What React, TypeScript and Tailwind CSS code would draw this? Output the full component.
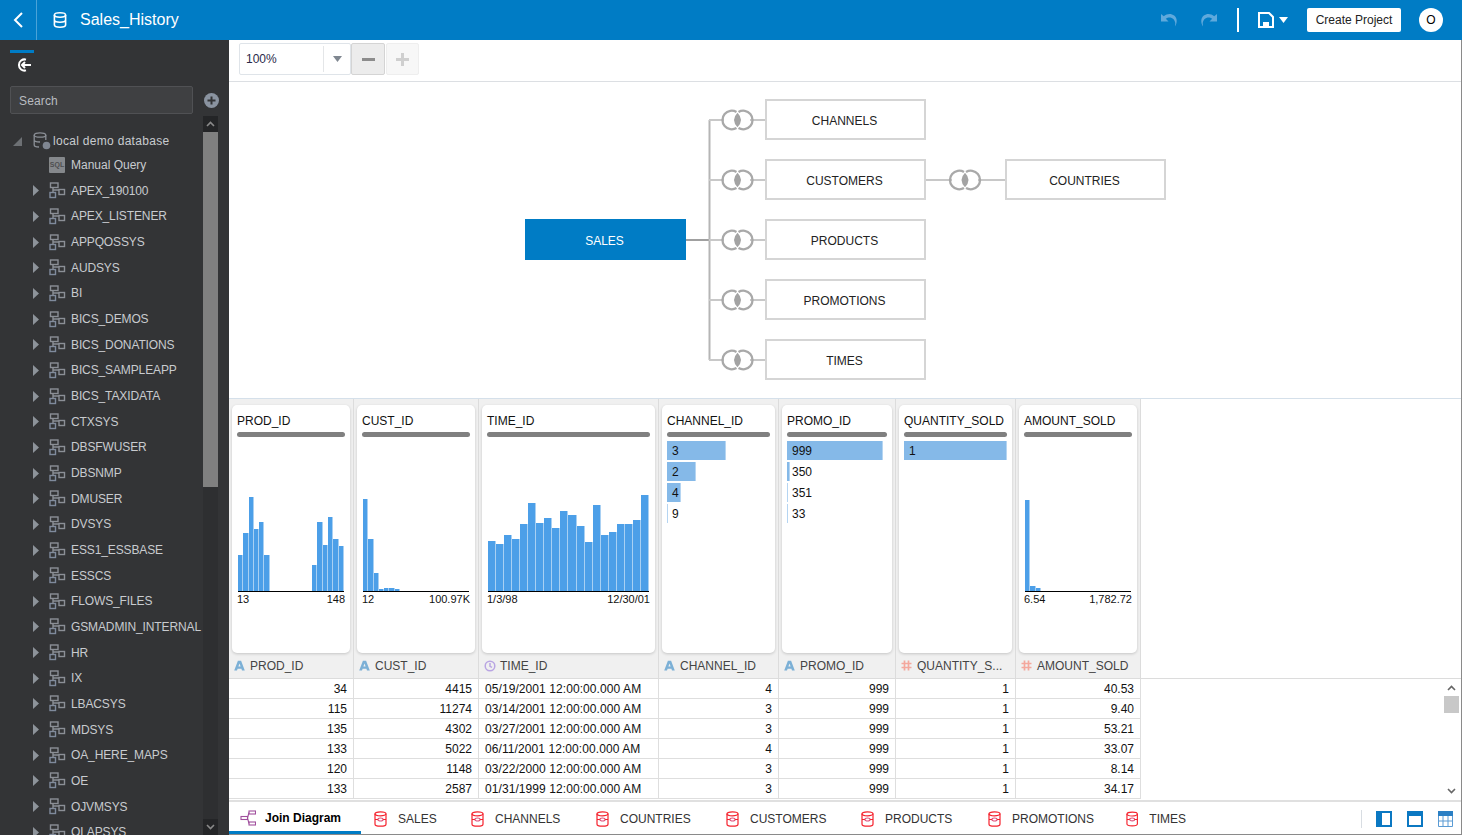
import React from 'react';

const schemas = [
  'APEX_190100', 'APEX_LISTENER', 'APPQOSSYS', 'AUDSYS', 'BI', 'BICS_DEMOS', 'BICS_DONATIONS', 'BICS_SAMPLEAPP',
  'BICS_TAXIDATA', 'CTXSYS', 'DBSFWUSER', 'DBSNMP', 'DMUSER', 'DVSYS', 'ESS1_ESSBASE', 'ESSCS', 'FLOWS_FILES',
  'GSMADMIN_INTERNAL', 'HR', 'IX', 'LBACSYS', 'MDSYS', 'OA_HERE_MAPS', 'OE', 'OJVMSYS', 'OLAPSYS',
];

const zero = (n: number) => Array.from({ length: n }, () => 0);

const columns = [
  { name: 'PROD_ID', kind: 'A', label: 'PROD_ID', width: 125, bars: [36, 58, 94, 62, 69, 36, ...zero(8), 26, 69, 46, 74, 52, 45], min: '13', max: '148' },
  { name: 'CUST_ID', kind: 'A', label: 'CUST_ID', width: 125, bars: [92, 52, 18, 2, 3, 3, 2, ...zero(13)], min: '12', max: '100.97K' },
  { name: 'TIME_ID', kind: 'T', label: 'TIME_ID', width: 180, bars: [50, 47, 56, 52, 67, 88, 68, 73, 63, 80, 76, 65, 49, 86, 56, 59, 67, 67, 71, 96], min: '1/3/98', max: '12/30/01' },
  { name: 'CHANNEL_ID', kind: 'A', label: 'CHANNEL_ID', width: 120, list: [['3', 59], ['2', 29], ['4', 14], ['9', 1]] },
  { name: 'PROMO_ID', kind: 'A', label: 'PROMO_ID', width: 117, list: [['999', 96], ['350', 2.5], ['351', 1], ['33', 1]] },
  { name: 'QUANTITY_SOLD', kind: 'N', label: 'QUANTITY_S...', width: 120, list: [['1', 103]] },
  { name: 'AMOUNT_SOLD', kind: 'N', label: 'AMOUNT_SOLD', width: 125, bars: [91, 5, 3, ...zero(17)], min: '6.54', max: '1,782.72' },
] as { name: string; kind: string; label: string; width: number; bars?: number[]; min?: string; max?: string; list?: [string, number][] }[];

const rows = [
  ['34', '4415', '05/19/2001 12:00:00.000 AM', '4', '999', '1', '40.53'],
  ['115', '11274', '03/14/2001 12:00:00.000 AM', '3', '999', '1', '9.40'],
  ['135', '4302', '03/27/2001 12:00:00.000 AM', '3', '999', '1', '53.21'],
  ['133', '5022', '06/11/2001 12:00:00.000 AM', '4', '999', '1', '33.07'],
  ['120', '1148', '03/22/2000 12:00:00.000 AM', '3', '999', '1', '8.14'],
  ['133', '2587', '01/31/1999 12:00:00.000 AM', '3', '999', '1', '34.17'],
];

const tabs = [
  { name: 'SALES', cls: 'w-[97px]' },
  { name: 'CHANNELS', cls: 'w-[125px]' },
  { name: 'COUNTRIES', cls: 'w-[130px]' },
  { name: 'CUSTOMERS', cls: 'w-[135px]' },
  { name: 'PRODUCTS', cls: 'w-[127px]' },
  { name: 'PROMOTIONS', cls: 'w-[138px]' },
  { name: 'TIMES', cls: 'w-[60px]' },
];
const rightTables = ['CHANNELS', 'CUSTOMERS', 'PRODUCTS', 'PROMOTIONS', 'TIMES'];

const SchemaIcon = () => (
  <svg width="17" height="17" viewBox="0 0 17 17" fill="none" stroke="#8b8f96" strokeWidth="1.4">
    <rect x="1" y="10.500" width="5.500" height="5" stroke="#7f8a9c" />
    <rect x="1.500" y="1" width="7.500" height="4.500" />
    <rect x="10" y="7.500" width="5.500" height="5" />
    <path d="M4 5.500V10.500M4 8H10" />
  </svg>
);

const TypeIcon = ({ kind }: { kind: string }) => {
  if (kind === 'T') {
    return (
      <svg width="12" height="12" viewBox="0 0 12 12" fill="none" stroke="#b9a5e3" strokeWidth="1.5">
        <circle cx="6" cy="6" r="4.800" />
        <path d="M6 3V6.300L8 7.300" />
      </svg>
    );
  }
  if (kind === 'N') {
    return (
      <svg width="11" height="11" viewBox="0 0 11 11" fill="none" stroke="#f4a79d" strokeWidth="1.7">
        <path d="M3.500 .5V10.500M7.500 .5V10.500M.5 3.500H10.500M.5 7.500H10.500" />
      </svg>
    );
  }
  return (
    <svg width="11" height="11" viewBox="0 0 11 11" fill="#7cb0d6">
      <path d="M3.900 .8H7.100L10.800 10.600H8L7.400 8.800H3.600L3 10.600H.2ZM4.400 6.600H6.600L5.500 3.500Z" fillRule="evenodd" />
    </svg>
  );
};

const RedDb = () => (
  <svg width="13" height="16" viewBox="0 0 13 16" fill="none" stroke="#f5222d" strokeWidth="1.2">
    <ellipse cx="6.500" cy="2.800" rx="5.500" ry="2" />
    <path d="M1 2.800V13.200C1 14.300 3.500 15.200 6.500 15.200S12 14.300 12 13.200V2.800" />
    <ellipse cx="6.500" cy="8.500" rx="2.600" ry="1.500" stroke="#e0507a" />
    <path d="M1 8.500H3.900M9.100 8.500H12" />
  </svg>
);

const Join = ({ x, y }: { x: number; y: number }) => (
  <g transform={`translate(${x} ${y})`}>
    <path d="M-1 -8A9.300 9.300 0 1 0 -1 8" fill="none" stroke="#a9a9a9" strokeWidth="2.300" />
    <path d="M1 -8A9.300 9.300 0 1 1 1 8" fill="none" stroke="#a9a9a9" strokeWidth="2.300" />
    <path d="M0 -7.200Q-7 0 0 7.200Q7 0 0 -7.200Z" fill="#a3a3a3" stroke="none" />
  </g>
);

const ArrowIcon = ({ className }: { className: string }) => (
  <svg className={className} width="18" height="14" viewBox="0 0 18 14" fill="#5fa9dc">
    <path d="M1 1V8.500H8.500L5.800 5.800C7.200 4.600 9 4.200 10.500 4.500C13 5 14.800 7 15.300 10L15 13.500C17.500 9.500 17.300 5.300 14.200 2.600C11 0 7 .5 3.800 3.300Z" />
  </svg>
);

const Histogram = ({ bars, min, max }: { bars: number[]; min: string; max: string }) => (
  <div className="flex-1 flex flex-col justify-end pb-[46px]">
    <div className="flex items-end mx-[1px] border-b border-black">
      {bars.map((h, i) => (
        <div key={i} className="flex-1 flex items-end">
          {h > 0 && <div className="w-full bg-[#4c9fe8] border-r border-[#a8d0f3]" style={{ height: h }} />}
        </div>
      ))}
    </div>
    <div className="flex justify-between text-[11px] leading-[15px] text-[#111]">
      <span>{min}</span>
      <span>{max}</span>
    </div>
  </div>
);

const ValueList = ({ list }: { list: [string, number][] }) => (
  <div className="mt-[4px] flex flex-col gap-[2px]">
    {list.map(([label, w]) => (
      <div key={label} className="relative h-[19px] leading-[21px] pl-[5px]">
        <div className="absolute left-0 top-0 h-full bg-[#85b9e8] border-r border-[#b5d5f2]" style={{ width: w }} />
        <span className="relative text-[#111]">{label}</span>
      </div>
    ))}
  </div>
);

export default function App() {
  return (
    <div className="w-[1462px] h-[835px] overflow-hidden flex flex-col bg-white text-[12px] font-['Liberation_Sans',Arial,sans-serif]">
      {/* Top bar */}
      <header className="h-[40px] shrink-0 bg-[#007cc5] flex items-center text-white">
        <div className="w-[37px] h-full border-r border-[#4aa3d8] flex items-center justify-center">
          <svg width="12" height="16" viewBox="0 0 12 16" fill="none" stroke="white" strokeWidth="2">
            <path d="M10 1L3 8L10 15" />
          </svg>
        </div>
        <svg className="ml-[16px]" width="14" height="16" viewBox="0 0 14 16" fill="none" stroke="white" strokeWidth="1.6">
          <ellipse cx="7" cy="3" rx="5.600" ry="2.200" />
          <path d="M1.400 3V13C1.400 14.200 3.900 15.200 7 15.200S12.600 14.200 12.600 13V3M1.400 8C1.400 9.200 3.900 10.200 7 10.200S12.600 9.200 12.600 8" />
        </svg>
        <span className="ml-[13px] text-[16px]">Sales_History</span>
        <div className="flex-1" />
        <ArrowIcon className="" />
        <ArrowIcon className="ml-[22px] -scale-x-100" />
        <div className="w-[2px] h-[24px] bg-white ml-[19px]" />
        <svg className="ml-[19px]" width="16" height="16" viewBox="0 0 16 16" fill="none" stroke="white" strokeWidth="2">
          <path d="M1 1H11L15 5V15H1Z" />
          <path d="M5 15V10H11V15" fill="white" stroke="none" />
        </svg>
        <svg className="ml-[5px]" width="9" height="6" viewBox="0 0 9 6" fill="white">
          <path d="M0 0H9L4.500 6Z" />
        </svg>
        <button className="ml-[19px] w-[94px] h-[24px] bg-white rounded-[2px] text-[#222] text-[12px]">Create Project</button>
        <div className="ml-[18px] mr-[19px] w-[24px] h-[24px] rounded-full bg-white text-black flex items-center justify-center">O</div>
      </header>

      <div className="flex-1 flex min-h-0">
        {/* Sidebar */}
        <aside className="w-[229px] shrink-0 bg-[#333436] flex flex-col overflow-hidden">
          <div className="h-[46px] shrink-0 pl-[10px] pt-[10px]">
            <div className="w-[24px] h-[3px] bg-[#007cc5]" />
            <svg className="ml-[5px] mt-[4px]" width="18" height="16" viewBox="0 0 18 16" fill="none" stroke="white" strokeWidth="2">
              <path d="M11 2.600A5.600 5.600 0 1 0 11 13.400" />
              <path d="M16 8H7M10 5L7 8L10 11" />
            </svg>
          </div>
          <div className="flex items-center h-[28px] shrink-0 pl-[10px]">
            <div className="w-[183px] h-full bg-[#3f4042] border border-[#505154] rounded-[2px] flex items-center pl-[8px] pt-[1px] text-[#b9bcc0] tracking-[0.15px]">Search</div>
            <svg className="ml-[11px]" width="15" height="15" viewBox="0 0 15 15">
              <circle cx="7.500" cy="7.500" r="7.500" fill="#8a93a0" />
              <path d="M7.500 3.500V11.500M3.500 7.500H11.500" stroke="#333436" strokeWidth="2" />
            </svg>
          </div>
          <div className="flex-1 min-h-0 flex mt-[2px]">
            <div className="w-[203px] shrink-0 overflow-hidden pt-[13px] text-[#c8cbcf] whitespace-nowrap">
              <div className="h-[24px] flex items-center">
                <svg className="ml-[13px]" width="9" height="9" viewBox="0 0 9 9" fill="#6d7074"><path d="M9 0V9H0Z" /></svg>
                <svg className="ml-[11px]" width="18" height="18" viewBox="0 0 18 18" fill="none" stroke="#8b8f96" strokeWidth="1.3">
                  <ellipse cx="7" cy="3" rx="5.800" ry="2.200" />
                  <path d="M1.200 3V13C1.200 14.200 3.500 15 6 15M12.800 3V8M1.200 8C1.200 9.200 3.800 10 7 10" />
                  <circle cx="13.500" cy="13.500" r="3.800" fill="#7f8691" stroke="none" />
                </svg>
                <span className="ml-[2px] tracking-[0.3px]">local demo database</span>
              </div>
              <div className="h-[25px] flex items-center pl-[49px] pb-[1px]">
                <div className="w-[16px] h-[16px] bg-[#85888c] rounded-[1px] text-[7px] leading-[16px] text-center text-[#4d4e50] font-bold">SQL</div>
                <span className="ml-[6px]">Manual Query</span>
              </div>
              {schemas.map((s) => (
                <div key={s} className="h-[25.67px] flex items-center">
                  <svg className="ml-[33px]" width="6" height="11" viewBox="0 0 6 11" fill="#8d939a"><path d="M0 0L6 5.500L0 11Z" /></svg>
                  <span className="ml-[10px] flex"><SchemaIcon /></span>
                  <span className="ml-[5px] tracking-[-0.12px]">{s}</span>
                </div>
              ))}
            </div>
            <div className="w-[15px] shrink-0 bg-[#2e2f31] flex flex-col">
              <div className="h-[16px] bg-[#242527] flex items-center justify-center">
                <svg width="9" height="6" viewBox="0 0 9 6" fill="none" stroke="#8a8a8a" strokeWidth="1.6"><path d="M1 5L4.500 1.500L8 5" /></svg>
              </div>
              <div className="h-[355px] bg-[#808080]" />
              <div className="flex-1" />
              <div className="h-[16px] bg-[#242527] flex items-center justify-center">
                <svg width="9" height="6" viewBox="0 0 9 6" fill="none" stroke="#8a8a8a" strokeWidth="1.6"><path d="M1 1L4.500 4.500L8 1" /></svg>
              </div>
            </div>
          </div>
        </aside>

        {/* Main */}
        <main className="flex-1 min-w-0 flex flex-col border-r border-b border-[#8a8a8a]">
          <div className="h-[42px] shrink-0 border-b border-[#dcdfe3] flex items-start pl-[10px] pt-[3px]">
            <div className="w-[112px] h-[32px] border border-[#dfe4e9] rounded-[2px] flex items-center bg-white">
              <span className="pl-[6px] flex-1 text-[#2a2a4a]">100%</span>
              <div className="w-[27px] h-[26px] border-l border-[#e4e6e8] flex items-center justify-center">
                <svg width="9" height="6" viewBox="0 0 9 6" fill="#7f8790"><path d="M0 0H9L4.500 6Z" /></svg>
              </div>
            </div>
            <div className="w-[34px] h-[32px] bg-[#ececec] border border-[#d4d4d4] rounded-[2px] flex items-center justify-center">
              <div className="w-[13px] h-[3px] bg-[#8c8c8c]" />
            </div>
            <div className="w-[33px] h-[32px] bg-[#f7f7f7] border border-[#eeeeee] rounded-[2px] ml-[1px] flex items-center justify-center text-[#cfcfcf]">
              <svg width="13" height="13" viewBox="0 0 13 13" fill="#cfcfcf"><path d="M5 0H8V5H13V8H8V13H5V8H0V5H5Z" /></svg>
            </div>
          </div>

          {/* Join diagram: free canvas */}
          <div className="relative h-[317px] shrink-0 border-b border-[#d5e0ea]">
            <svg className="absolute inset-0" width="1232" height="316" viewBox="229 82 1232 316" fill="none" stroke="#c8c8c8" strokeWidth="2">
              <path d="M686 240H709" stroke="#a0a0a0" />
              <path d="M709.500 120V360" stroke="#b5b5b5" />
              {[120, 180, 240, 300, 360].map((y) => (
                <g key={y}>
                  <path d={`M709 ${y}H724M750 ${y}H765`} />
                  <Join x={737.500} y={y} />
                </g>
              ))}
              <path d="M926 180H952M978 180H1005" />
              <Join x={965} y={180} />
            </svg>
            {rightTables.map((t, i) => (
              <div
                key={t}
                className="absolute left-[536px] w-[161px] h-[41px] pt-[2px] pr-[2px] border-2 border-[#d5d5d5] bg-white flex items-center justify-center text-[#222]"
                style={{ top: 17 + i * 60 }}
              >
                {t}
              </div>
            ))}
            <div className="absolute left-[776px] top-[77px] w-[161px] h-[41px] pt-[2px] pr-[2px] border-2 border-[#d5d5d5] bg-white flex items-center justify-center text-[#222]">COUNTRIES</div>
            <div className="absolute left-[296px] top-[137px] w-[161px] h-[41px] pt-[2px] pr-[2px] bg-[#007cc5] flex items-center justify-center text-white">SALES</div>
          </div>

          {/* Column profile */}
          <div className="flex h-[280px] shrink-0 border-b border-[#dcdcdc]">
            {columns.map((c) => (
              <div key={c.name} className="bg-[#f0f0f0] border-r border-[#dcdcdc] flex flex-col px-[3px] pt-[6px] shrink-0" style={{ width: c.width }}>
                <div className="h-[248px] bg-white rounded-[5px] shadow-[0_1px_3px_rgba(0,0,0,0.18)] px-[5px] flex flex-col">
                  <div className="pt-[8px] leading-[16px] text-[#111]">{c.name}</div>
                  <div className="h-[5px] mt-[3px] rounded-full bg-[#808080] shrink-0" />
                  {c.bars ? <Histogram bars={c.bars} min={c.min!} max={c.max!} /> : <ValueList list={c.list!} />}
                </div>
                <div className="flex-1 flex items-center pl-[2px] text-[#444]">
                  <span className="w-[15px] flex"><TypeIcon kind={c.kind} /></span>
                  <span className="ml-[1px] whitespace-nowrap">{c.label}</span>
                </div>
              </div>
            ))}
          </div>

          {/* Data rows */}
          <div className="flex flex-1 min-h-0">
            <div className="flex-1 min-w-0">
              {rows.map((r, i) => (
                <div key={i} className="flex h-[20px]">
                  {r.map((v, j) => (
                    <div
                      key={j}
                      className={`border-r border-b border-[#dedede] leading-[21px] text-[#111] whitespace-nowrap ${j === 2 ? 'pl-[6px] tracking-[0.08px]' : 'text-right pr-[6px]'}`}
                      style={{ width: columns[j].width }}
                    >
                      {v}
                    </div>
                  ))}
                </div>
              ))}
            </div>
            <div className="w-[15px] mr-[2px] shrink-0 flex flex-col items-center">
              <svg className="mt-[6px]" width="9" height="6" viewBox="0 0 9 6" fill="none" stroke="#666" strokeWidth="1.6"><path d="M1 5L4.500 1.500L8 5" /></svg>
              <div className="w-full h-[17px] mt-[5px] bg-[#c8c8c8]" />
              <div className="flex-1" />
              <svg className="mb-[6px]" width="9" height="6" viewBox="0 0 9 6" fill="none" stroke="#666" strokeWidth="1.6"><path d="M1 1L4.500 4.500L8 1" /></svg>
            </div>
          </div>

          {/* Bottom tabs */}
          <div className="h-[34px] shrink-0 border-t-2 border-[#e0e0e0] flex items-stretch text-[#333]">
            <div className="w-[132px] border-b-[3px] border-[#007cc5] flex items-center pl-[11px] pt-[2px] mr-[13px]">
              <svg width="16" height="16" viewBox="0 0 16 16" fill="none" stroke="#a04f9d" strokeWidth="1.1">
                <rect x="9" y="1" width="6.500" height="3" />
                <rect x="1" y="6.500" width="6.500" height="3" />
                <rect x="9" y="12" width="6.500" height="3" />
                <path d="M7.500 8L9 2.500M7.500 8L9 13.500" />
              </svg>
              <span className="ml-[9px] font-bold text-black">Join Diagram</span>
            </div>
            {tabs.map((t) => (
              <div key={t.name} className={`flex items-center shrink-0 pt-[1px] ${t.cls}`}>
                <RedDb />
                <span className="ml-[11px]">{t.name}</span>
              </div>
            ))}
            <div className="flex-1" />
            <div className="flex items-center pr-[8px] pt-[2px]">
              <div className="w-[1px] h-[18px] bg-[#d8dde2] mr-[14px]" />
              <svg width="16" height="16" viewBox="0 0 16 16"><rect width="16" height="16" fill="#0b78c2" /><rect x="6" y="2" width="8" height="12" fill="white" /></svg>
              <svg className="ml-[15px]" width="16" height="16" viewBox="0 0 16 16"><rect width="16" height="16" fill="#0b78c2" /><rect x="2" y="5" width="12" height="9" fill="white" /></svg>
              <svg className="ml-[15px]" width="15" height="16" viewBox="0 0 15 16" fill="none"><rect width="15" height="5" fill="#2a7fc4" /><path d="M.5 5V15.500H14.500V5M5 5V15.500M10 5V15.500M.5 10H14.500" stroke="#5a9bd4" /></svg>
            </div>
          </div>
        </main>
      </div>
    </div>
  );
}
